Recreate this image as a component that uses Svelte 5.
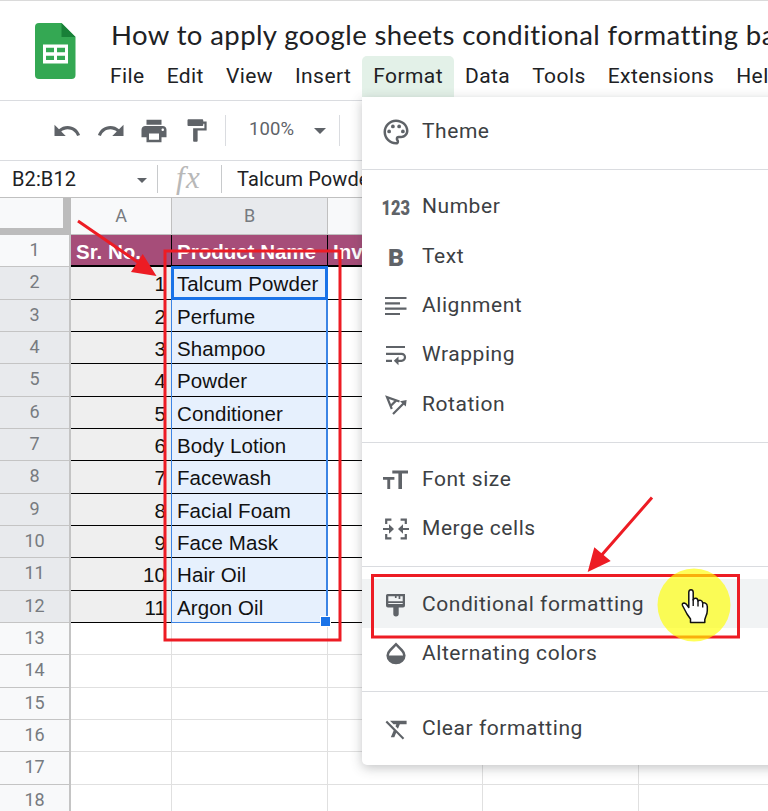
<script lang="ts">
	const menus = ['File', 'Edit', 'View', 'Insert', 'Format', 'Data', 'Tools', 'Extensions', 'Help'];

	const products = [
		'Talcum Powder',
		'Perfume',
		'Shampoo',
		'Powder',
		'Conditioner',
		'Body Lotion',
		'Facewash',
		'Facial Foam',
		'Face Mask',
		'Hair Oil',
		'Argon Oil'
	];

	const emptyRows = [13, 14, 15, 16, 17, 18];

	const groups = [
		[{ icon: 'theme', label: 'Theme' }],
		[
			{ icon: 'number', label: 'Number' },
			{ icon: 'bold', label: 'Text' },
			{ icon: 'align', label: 'Alignment' },
			{ icon: 'wrap', label: 'Wrapping' },
			{ icon: 'rotate', label: 'Rotation' }
		],
		[
			{ icon: 'size', label: 'Font size' },
			{ icon: 'merge', label: 'Merge cells' }
		],
		[
			{ icon: 'brush', label: 'Conditional formatting' },
			{ icon: 'drop', label: 'Alternating colors' }
		],
		[{ icon: 'clear', label: 'Clear formatting' }]
	];
</script>

{#snippet icon(name: string)}
	<svg class="icon" viewBox="0 0 30 30">
		{#if name === 'theme'}
			<g transform="scale(1.25)">
				<path d="M12 22C6.49 22 2 17.51 2 12S6.49 2 12 2s10 4.04 10 9c0 3.31-2.69 6-6 6h-1.77c-.28 0-.5.22-.5.5 0 .12.05.23.13.33.41.47.64 1.06.64 1.67A2.5 2.5 0 0 1 12 22zm0-18c-4.41 0-8 3.59-8 8s3.59 8 8 8c.28 0 .5-.22.5-.5a.54.54 0 0 0-.14-.35c-.41-.46-.63-1.05-.63-1.65a2.5 2.5 0 0 1 2.5-2.5H16c2.21 0 4-1.79 4-4 0-3.86-3.59-7-8-7z" />
				<circle cx="6.5" cy="11.5" r="1.5" />
				<circle cx="9.5" cy="7.5" r="1.5" />
				<circle cx="14.5" cy="7.5" r="1.5" />
				<circle cx="17.5" cy="11.5" r="1.5" />
			</g>
		{:else if name === 'number'}
			<text x="0.5" y="22.7" font-size="21" textLength="28.5" lengthAdjust="spacingAndGlyphs">123</text>
		{:else if name === 'bold'}
			<text x="7" y="23.5" font-size="24" textLength="16" lengthAdjust="spacingAndGlyphs">B</text>
		{:else if name === 'align'}
			<path class="line" d="M4 7h21.5M4 12.3h15M4 17.6h21.5M4 23h15" />
		{:else if name === 'wrap'}
			<path class="line" d="M5 7h19M5 13.8h15.5a3.4 3.4 0 0 1 0 7H14M5 20.8h6" />
			<path d="M17.5 16.4v8.8L12.8 20.8z" />
		{:else if name === 'rotate'}
			<path class="line" d="M18.5 11.5L6 7.2L10.8 19M15 10.6L9.6 16M12 24L23 13" />
			<path d="M19 11.3l6.6-1.2-.8 6.4z" />
		{:else if name === 'size'}
			<path d="M11.3 5.5H27v2.9h-6V24h-3.6V8.4h-6.1zM2 12h11.4v2.8H9.2V24H6.3v-9.2H2z" />
		{:else if name === 'merge'}
			<path class="line" d="M10.4 5.6H5.2V10M5.2 20v4.3h5.2M19.6 5.6h5.2V10M24.8 20v4.3h-5.2M2 15h9M28 15h-9" />
			<path d="M8 10.3l5 4.7-5 4.7zM22 10.3L17 15l5 4.7z" />
		{:else if name === 'brush'}
			<path d="M6.5 4H24v11.5q0 2-2 2h-4.3V24q0 2.4-2.7 2.4T12.3 24v-6.5H7q-2 0-2-2v-10Q5 4 6.5 4zM7.3 6.2v5h14.4v-5h-2.4V9h-1.7V6.2h-2V8h-1.7V6.2zM7.3 13v1h14.4v-1z" fill-rule="evenodd" />
		{:else if name === 'drop'}
			<path d="M15 3.4l6.7 6.9a9.6 9.6 0 0 1 2.9 6.3 9.6 8.7 0 0 1-19.2 0 9.6 9.6 0 0 1 2.900-6.300zM15 7l-5 5.200a6.600 6.600 0 0 0-2.100 4.200h14.200A6.600 6.600 0 0 0 20 12.200z" fill-rule="evenodd" />
		{:else if name === 'clear'}
			<path transform="translate(2.2 0.9) scale(1.17)" d="M3.27 5L2 6.27l6.97 6.97L6.5 19h3l1.57-3.66L16.73 21 18 19.73 3.55 5.27 3.27 5zM6 5v.18L8.82 8h2.4l-.72 1.68 2.1 2.1L14.21 8H20V5H6z" />
		{/if}
	</svg>
{/snippet}

<div class="app">
	<header>
		<svg class="logo" viewBox="0 0 41 56">
			<path d="M4 0H26.5L40.5 14V52Q40.5 56 36.5 56H4Q0 56 0 52V4Q0 0 4 0z" fill="#34a853" />
			<path d="M26.5 0L40.5 14H26.5z" fill="#188038" />
			<path d="M8 21.5H33V40.5H8zM11 24.8v4.4h8v-4.4zM22 24.8v4.4h8v-4.4zM11 32.7v4.4h8v-4.4zM22 32.7v4.4h8v-4.4z" fill="#fff" fill-rule="evenodd" />
		</svg>
		<div class="heading">
			<div class="title">How to apply google sheets conditional formatting based</div>
			<nav>
				{#each menus as menu}
					<span class="menu-name" class:open={menu === 'Format'}>{menu}</span>
				{/each}
			</nav>
		</div>
	</header>

	<div class="toolbar">
		<svg class="tool" viewBox="0 0 24 24"><path d="M12.5 8c-2.65 0-5.05.99-6.9 2.6L2 7v9h9l-3.62-3.62c1.39-1.16 3.16-1.88 5.12-1.88 3.54 0 6.55 2.31 7.6 5.5l2.37-.78C21.08 11.03 17.15 8 12.5 8z" /></svg>
		<svg class="tool" viewBox="0 0 24 24"><path d="M18.4 10.6C16.55 8.99 14.15 8 11.5 8c-4.65 0-8.58 3.03-9.96 7.22L3.9 16c1.05-3.19 4.05-5.5 7.6-5.5 1.95 0 3.73.72 5.12 1.88L13 16h9V7l-3.6 3.6z" /></svg>
		<svg class="tool print" viewBox="0 0 24 24"><path d="M19 8H5c-1.66 0-3 1.34-3 3v6h4v4h12v-4h4v-6c0-1.66-1.34-3-3-3zm-3 11H8v-5h8v5zm3-7c-.55 0-1-.45-1-1s.45-1 1-1 1 .45 1 1-.45 1-1 1zm-1-9H6v4h12V3z" /></svg>
		<svg class="tool paint" viewBox="0 0 24 24"><path d="M18 4V3c0-.55-.45-1-1-1H5c-.55 0-1 .45-1 1v4c0 .55.45 1 1 1h12c.55 0 1-.45 1-1V6h1v4H9v11c0 .55.45 1 1 1h2c.55 0 1-.45 1-1v-9h8V4h-3z" /></svg>
		<i class="sep"></i>
		<span class="zoom">100%</span>
		<i class="caret"></i>
		<i class="sep"></i>
	</div>

	<div class="formula">
		<span class="range">B2:B12</span>
		<i class="caret small"></i>
		<i class="sep"></i>
		<span class="fx">fx</span>
		<i class="sep"></i>
		<span>Talcum Powder</span>
	</div>

	<div class="sheet">
		<div class="row letters">
			<div class="corner"></div>
			<div class="a">A</div>
			<div class="b active">B</div>
			<div class="c"></div>
			<div class="c"></div>
			<div class="c"></div>
		</div>
		<div class="row titles">
			<div class="num">1</div>
			<div class="cell a">Sr. No.</div>
			<div class="cell b">Product Name</div>
			<div class="cell c">Inv</div>
		</div>
		{#each products as product, i}
			<div class="row filled">
				<div class="num active">{i + 2}</div>
				<div class="cell a">{i + 1}</div>
				<div class="cell b">{product}</div>
				<div class="cell c"></div>
				<div class="cell c"></div>
				<div class="cell c"></div>
			</div>
		{/each}
		{#each emptyRows as n}
			<div class="row">
				<div class="num">{n}</div>
				<div class="cell a"></div>
				<div class="cell b"></div>
				<div class="cell c"></div>
				<div class="cell c"></div>
				<div class="cell c"></div>
			</div>
		{/each}
		<div class="selection"><i class="cursor-cell"></i><i class="handle"></i></div>
	</div>

	<div class="dropdown">
		{#each groups as group}
			<div class="group">
				{#each group as item}
					<div class="item" class:hover={item.icon === 'brush'}>
						{@render icon(item.icon)}
						<span>{item.label}</span>
					</div>
				{/each}
			</div>
		{/each}
	</div>

	<svg class="marks" viewBox="0 0 768 811">
		<g fill="none" stroke="#ed1c24" stroke-width="3">
			<rect x="165" y="251" width="175" height="389" />
			<rect x="372.5" y="575.5" width="366" height="61.5" />
			<path d="M78 221L142 265M652 497.5L600 557" />
		</g>
		<path d="M156.5 276L142.7 254L131 272zM587.7 572L594.3 547.3L610.7 561z" fill="#ed1c24" />
		<circle cx="694" cy="605" r="36.5" fill="#ffff00" fill-opacity="0.65" />
		<path
			d="M690.5 622.5v-3.5l-3.5-5-4.5-8.5q-.8-2.500 1.700-2.500 1.600.2 2.800 2l1.800 2.500V592q.2-2.300 2.200-2.300t2.200 2.300v8q.6-2 2.600-1.700 2 .3 2.200 2.700 1-1.200 2.800-.6 1.800.6 1.900 2.900 1-.9 2.600-.2 2 .9 2 3.400v4q0 3-1.500 6l-1 3v3z"
			fill="#fff"
			stroke="#111"
			stroke-width="1.5"
			stroke-linejoin="round"
		/>
		<path d="M693.2 599v7M698 601v5.5M702.7 603.5v4" fill="none" stroke="#111" stroke-width="1.4" />
	</svg>
</div>

<style>
	:global(body) {
		margin: 0;
		overflow: hidden;
	}

	.app {
		position: relative;
		width: 768px;
		height: 811px;
		overflow: hidden;
		background: #fff;
		color: #202124;
		font-family: Roboto, sans-serif;
		white-space: nowrap;
	}

	.app * {
		box-sizing: border-box;
	}

	header {
		display: flex;
		height: 101px;
		border-top: 1px solid #dadada;
		border-bottom: 1px solid #dadce0;
	}

	.logo {
		flex: none;
		width: 41px;
		height: 56px;
		margin: 22px 0 0 35px;
	}

	.heading {
		margin-left: 23px;
		padding-top: 16px;
	}

	.title {
		height: 39px;
		padding-left: 12px;
		font-family: Lato, sans-serif;
		font-size: 27.5px;
		line-height: 35px;
		letter-spacing: 0.4px;
	}

	nav {
		display: flex;
	}

	.menu-name {
		height: 41px;
		padding: 0 11px;
		border-radius: 5px 5px 0 0;
		font-size: 21px;
		line-height: 40px;
		letter-spacing: 0.42px;
	}

	.menu-name.open {
		background: #e3f1e8;
	}

	.toolbar {
		display: flex;
		align-items: center;
		height: 60px;
		padding-left: 52px;
		border-bottom: 1px solid #dadce0;
	}

	.tool {
		width: 30px;
		height: 30px;
		margin-right: 14px;
		fill: #5f6368;
	}

	.tool.print {
		margin: 0 14px 0 -1px;
	}

	.tool.paint {
		width: 27px;
		height: 27px;
		margin-right: 15px;
	}

	.sep {
		width: 1px;
		height: 31px;
		background: #dadce0;
	}

	.zoom {
		width: 65px;
		margin: -3px 0 0 23px;
		font-size: 18.5px;
		letter-spacing: 0.1px;
		color: #5f6368;
	}

	.caret {
		border: 6px solid transparent;
		border-top-color: #5f6368;
		border-bottom: 0;
		margin-right: 13px;
	}

	.formula {
		display: flex;
		align-items: center;
		height: 37px;
		padding-left: 12px;
		border-bottom: 1px solid #c0c0c0;
		font-size: 20px;
		letter-spacing: 0.1px;
	}

	.range {
		width: 125px;
	}

	.caret.small {
		border-width: 5px 5px 0;
		margin: 2px 10px 0 0;
	}

	.formula .sep {
		height: 28px;
		background: #c8cacc;
	}

	.fx {
		width: 45px;
		margin: -3px 0 0 18px;
		font: italic 31px 'Liberation Serif', serif;
		letter-spacing: 1.5px;
		color: #b8b8b8;
	}

	.formula .fx + .sep {
		margin-right: 15px;
	}

	.sheet {
		position: relative;
		font-family: 'Liberation Sans', sans-serif;
		font-size: 20.5px;
	}

	.row {
		display: flex;
		height: 32.33px;
	}

	.row > div {
		flex: none;
	}

	.letters {
		height: 37px;
		font: 18px/36px Roboto, sans-serif;
		color: #777b80;
		text-align: center;
	}

	.letters > div {
		background: #f8f9fa;
		border-right: 1px solid #c0c0c0;
		border-bottom: 1px solid #c0c0c0;
	}

	.letters .corner {
		width: 71px;
		border-right: 8px solid #bcbcbc;
		border-bottom: 7px solid #bcbcbc;
	}

	.letters .active,
	.num.active {
		background: #e8eaed;
	}

	.num {
		width: 71px;
		border-right: 2px solid #c4c4c4;
		border-bottom: 1px solid #c4c4c4;
		background: #f8f9fa;
		font: 18px/29px Roboto, sans-serif;
		color: #777b80;
		text-align: center;
	}

	.a {
		width: 101px;
	}

	.b {
		width: 156px;
	}

	.c {
		width: 155.3px;
	}

	.cell {
		padding: 0 5px;
		border-right: 1px solid #e0e0e0;
		border-bottom: 1px solid #e0e0e0;
		line-height: 33px;
		letter-spacing: 0.1px;
	}

	.titles .cell {
		border-right: 1px solid #000;
		border-bottom: 2px solid #000;
		background: #a64d79;
		color: #fff;
		font-weight: bold;
		letter-spacing: 0;
	}

	.filled .cell {
		border-bottom-color: #000;
		color: #111;
	}

	.filled .cell.a {
		background: #efefef;
		text-align: right;
	}

	.filled .cell.b {
		background: #e6f0fd;
	}

	.selection {
		position: absolute;
		left: 171px;
		top: 68px;
		width: 157px;
		height: 357px;
		border: 1px solid #3c84e4;
		border-right-width: 2px;
	}

	.cursor-cell {
		position: absolute;
		left: -1px;
		top: -1px;
		width: 157px;
		height: 34px;
		border: 3px solid #1a73e8;
	}

	.handle {
		position: absolute;
		right: -5px;
		bottom: -5px;
		width: 11px;
		height: 11px;
		border: 1px solid #fff;
		background: #1a73e8;
	}

	.dropdown {
		position: absolute;
		left: 362px;
		top: 97px;
		width: 440px;
		height: 668px;
		padding-top: 9.5px;
		border-radius: 0 0 5px 5px;
		background: #fff;
		box-shadow: 0 3px 12px rgba(60, 64, 67, 0.3);
	}

	.group + .group {
		margin-top: 13.5px;
		padding-top: 11.5px;
		border-top: 1px solid #dadce0;
	}

	.item {
		display: flex;
		align-items: center;
		height: 49.3px;
		padding-left: 19px;
		font-size: 21px;
		letter-spacing: 0.55px;
		color: #3c4043;
	}

	.item.hover {
		background: #f1f3f4;
	}

	.icon {
		width: 30px;
		height: 30px;
		margin: 2px 11px 0 0;
		overflow: visible;
		fill: #5f6368;
		font-family: Roboto, sans-serif;
		font-weight: 900;
		letter-spacing: 0;
	}

	.icon .line {
		fill: none;
		stroke: #5f6368;
		stroke-width: 2.2;
	}

	.marks {
		position: absolute;
		inset: 0;
		width: 768px;
		height: 811px;
	}
</style>
